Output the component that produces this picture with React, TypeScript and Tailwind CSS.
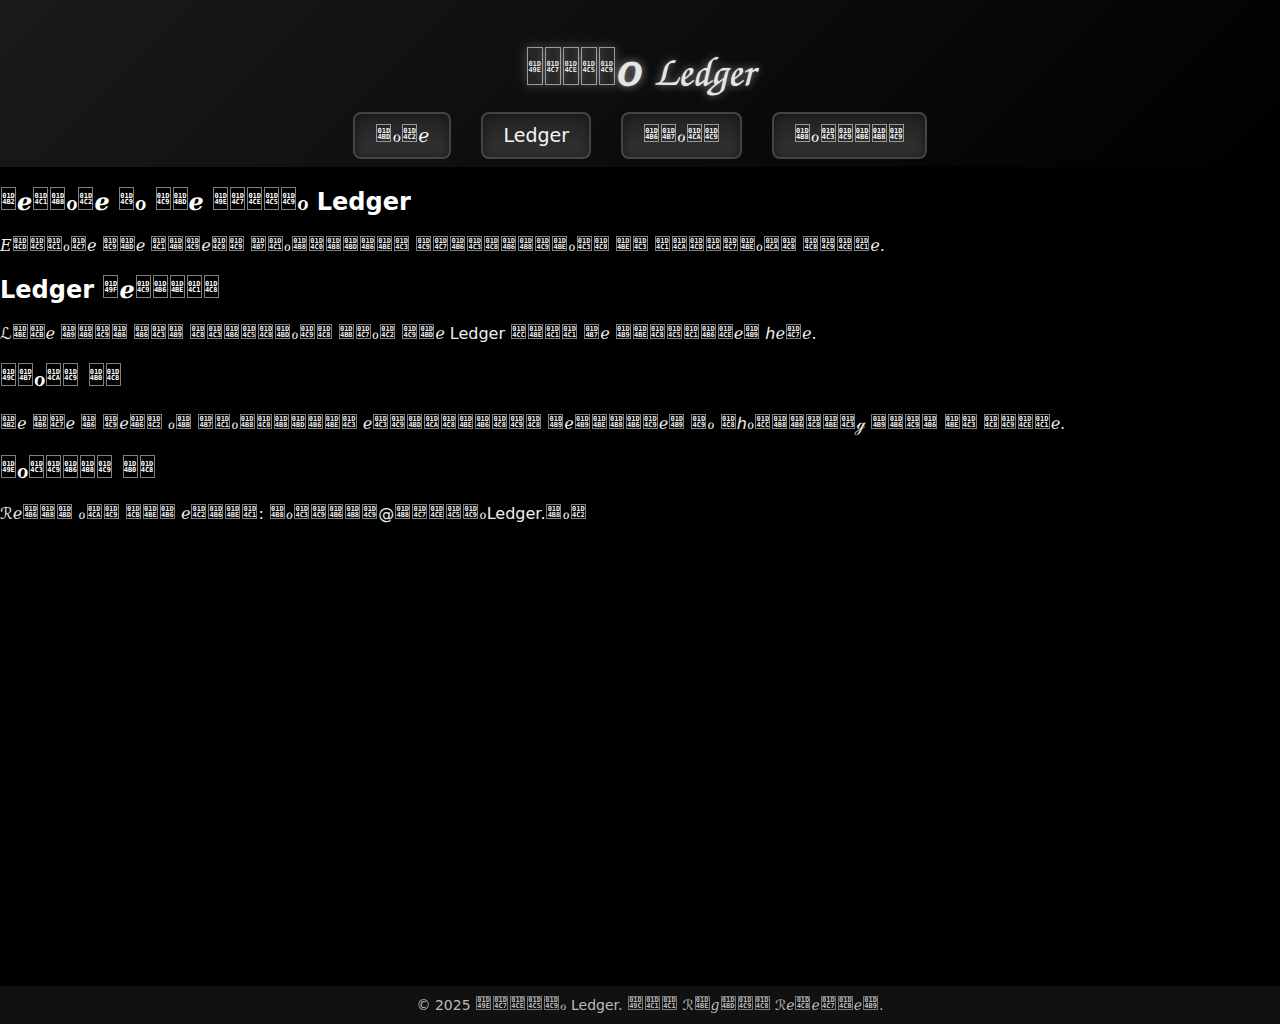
import React from "react";

interface Section {
    id: string;
    title: string;
    text: string;
    textClass: string;
}

// code box per text size
const boxStyles: { [key: string]: string } = {
    title: "mx-px h-[38px] w-4 pt-[13px] border-[#999] bg-[#ffffff18] shadow-[0_0_12px_#ffffff40]",
    heading: "mx-px h-[23px] w-[15px] pt-[5px] border-[#808080]",
    nav: "mx-px h-[18px] w-[15px] pt-[3px] border-[#999]",
    body: "mx-px h-[15px] w-[15px] pt-px border-[#808080]",
    footer: "mx-px h-[14px] w-[15px] border-[#777]",
};

const navItems = [
    { id: "home", label: "𝒽ℴ𝓂ℯ" },
    { id: "ledger", label: "Ledger" },
    { id: "about", label: "𝒶𝒷ℴ𝓊𝓉" },
    { id: "contact", label: "𝒸ℴ𝓃𝓉𝒶𝒸𝓉" },
];

const sections: Section[] = [
    {
        id: "home",
        title: "𝒲ℯ𝓁𝒸ℴ𝓂ℯ 𝓉ℴ 𝓉𝒽ℯ 𝒞𝓇𝓎𝓅𝓉ℴ Ledger",
        text: "𝐸𝓍𝓅𝓁ℴ𝓇ℯ 𝓉𝒽ℯ 𝓁𝒶𝓉ℯ𝓈𝓉 𝒷𝓁ℴ𝒸𝓀𝒸𝒽𝒶𝒾𝓃 𝓉𝓇𝒶𝓃𝓈𝒶𝒸𝓉𝒾ℴ𝓃𝓈 𝒾𝓃 𝓁𝓊𝓍𝓊𝓇𝒾ℴ𝓊𝓈 𝓈𝓉𝓎𝓁ℯ.",
        textClass: "leading-[19px]",
    },
    {
        id: "ledger",
        title: "Ledger 𝒟ℯ𝓉𝒶𝒾𝓁𝓈",
        text: "ℒ𝒾𝓋ℯ 𝒹𝒶𝓉𝒶 𝒶𝓃𝒹 𝓈𝓃𝒶𝓅𝓈𝒽ℴ𝓉𝓈 𝒻𝓇ℴ𝓂 𝓉𝒽ℯ Ledger 𝓌𝒾𝓁𝓁 𝒷ℯ 𝒹𝒾𝓈𝓅𝓁𝒶𝓎ℯ𝒹 ℎℯ𝓇ℯ.",
        textClass: "leading-[19px]",
    },
    {
        id: "about",
        title: "𝒜𝒷ℴ𝓊𝓉 𝒰𝓈",
        text: "𝒲ℯ 𝒶𝓇ℯ 𝒶 𝓉ℯ𝒶𝓂 ℴ𝒻 𝒷𝓁ℴ𝒸𝓀𝒸𝒽𝒶𝒾𝓃 ℯ𝓃𝓉𝒽𝓊𝓈𝒾𝒶𝓈𝓉𝓈 𝒹ℯ𝒹𝒾𝒸𝒶𝓉ℯ𝒹 𝓉ℴ 𝓈ℎℴ𝓌𝒸𝒶𝓈𝒾𝓃ℊ 𝒹𝒶𝓉𝒶 𝒾𝓃 𝓈𝓉𝓎𝓁ℯ.",
        textClass: "leading-[23px]",
    },
    {
        id: "contact",
        title: "𝒞ℴ𝓃𝓉𝒶𝒸𝓉 𝒰𝓈",
        text: "ℛℯ𝒶𝒸𝒽 ℴ𝓊𝓉 𝓋𝒾𝒶 ℯ𝓂𝒶𝒾𝓁: 𝒸ℴ𝓃𝓉𝒶𝒸𝓉@𝒸𝓇𝓎𝓅𝓉ℴLedger.𝒸ℴ𝓂",
        textClass: "leading-[19px]",
    },
];

// script letters from U+1D49C to U+1D4CF are drawn as their code point in a box
const isScriptLetter = (char: string) => {
    const code = char.codePointAt(0)!;
    return code >= 0x1d49c && code <= 0x1d4cf;
};

function ScriptText({ text, size }: { text: string; size: string }) {
    return (
        <>
            {Array.from(text).map((char, index) => {
                if (!isScriptLetter(char)) return char;
                const hex = char.codePointAt(0)!.toString(16).toUpperCase().padStart(6, "0");
                return (
                    <span key={index} role="img" aria-label={char}
                        className={`inline-block overflow-hidden border text-center font-['DejaVu_Sans_Mono',monospace] text-[7px] leading-[6px] font-bold text-shadow-none ${boxStyles[size]}`}>
                        <span className="block">{hex.slice(0, 3)}</span>
                        <span className="block">{hex.slice(3)}</span>
                    </span>
                );
            })}
        </>
    );
}

export default function App() {
    return (
        <div className="flex min-h-screen flex-col bg-black font-['DejaVu_Sans','DejaVu_Serif',sans-serif] leading-[normal] text-white">
            <header className="bg-linear-135/srgb from-[#1a1a1a] to-black pt-10 pb-2 text-center">
                <h1 className="font-['TeX_Gyre_Chorus','DejaVu_Math_TeX_Gyre',cursive] text-[42px] leading-[60px] font-bold text-[#e5e5e5] [text-shadow:0_0_1px_#e5e5e5,0_0_10px_#ffffff99]">
                    <ScriptText text="𝒞𝓇𝓎𝓅𝓉𝑜 Ledger" size="title" />
                </h1>
                <nav className="mt-3 flex justify-center gap-[30px]">
                    {navItems.map((item) => (
                        <a key={item.id} href={`#${item.id}`}
                            className="rounded-lg border-2 border-[#444] bg-linear-to-b/srgb from-[#222] to-[#333] px-5 py-[10px] text-[19px] leading-[23px] text-[#f5f5f5] shadow-[inset_0_0_10px_#00000080]">
                            <ScriptText text={item.label} size="nav" />
                        </a>
                    ))}
                </nav>
            </header>
            <main className="flex-1">
                {sections.map((section) => (
                    <section key={section.id} id={section.id}>
                        <h2 className="my-5 text-2xl leading-7 font-bold">
                            <ScriptText text={section.title} size="heading" />
                        </h2>
                        <p className={`my-4 text-base text-[#eee] ${section.textClass}`}>
                            <ScriptText text={section.text} size="body" />
                        </p>
                    </section>
                ))}
            </main>
            <footer className="bg-[#111] py-[10px] pl-5 text-center text-[14px] leading-[18px] text-[#bbb]">
                <ScriptText text="© 2025 𝒞𝓇𝓎𝓅𝓉ℴ Ledger. 𝒜𝓁𝓁 ℛ𝒾𝑔𝒽𝓉𝓈 ℛℯ𝓈ℯ𝓇𝓋ℯ𝒹." size="footer" />
            </footer>
        </div>
    );
}
